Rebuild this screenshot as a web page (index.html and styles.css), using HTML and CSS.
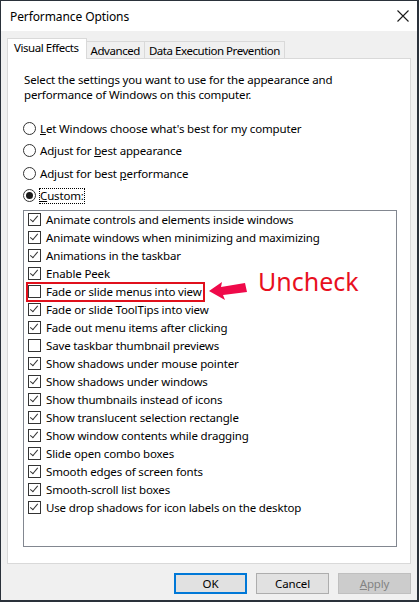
FILE: index.html
```html
<!DOCTYPE html>
<html>
<head>
<meta charset="utf-8">
<link rel="stylesheet" href="styles.css">
</head>
<body>
<div class="window">
  <div class="titlebar">
    <span class="title">Performance Options</span>
    <svg class="close" width="12" height="12" viewBox="0 0 12 12"><path d="M0.5 0.5 L11.5 11.5 M11.5 0.5 L0.5 11.5" stroke="#1a1a1a" stroke-width="1.1" fill="none"/></svg>
  </div>
  <div class="client">
    <div class="tabs">
      <div class="tab active">Visual Effects</div>
      <div class="tab">Advanced</div>
      <div class="tab">Data Execution Prevention</div>
    </div>
    <div class="panel">
      <p class="intro">Select the settings you want to use for the appearance and performance of Windows on this computer.</p>
      <div class="radios">
        <div class="radio"><span class="circle"></span><span><u>L</u>et Windows choose what's best for my computer</span></div>
        <div class="radio"><span class="circle"></span><span>Adjust for <u>b</u>est appearance</span></div>
        <div class="radio"><span class="circle"></span><span>Adjust for best <u>p</u>erformance</span></div>
        <div class="radio"><span class="circle on"></span><span class="focus"><u>C</u>ustom:</span></div>
      </div>
      <div class="listbox">
        <div class="item"><span class="cb on"></span>Animate controls and elements inside windows</div>
        <div class="item"><span class="cb on"></span>Animate windows when minimizing and maximizing</div>
        <div class="item"><span class="cb on"></span>Animations in the taskbar</div>
        <div class="item"><span class="cb on"></span>Enable Peek</div>
        <div class="item"><span class="cb"></span>Fade or slide menus into view</div>
        <div class="item"><span class="cb on"></span>Fade or slide ToolTips into view</div>
        <div class="item"><span class="cb on"></span>Fade out menu items after clicking</div>
        <div class="item"><span class="cb"></span>Save taskbar thumbnail previews</div>
        <div class="item"><span class="cb on"></span>Show shadows under mouse pointer</div>
        <div class="item"><span class="cb on"></span>Show shadows under windows</div>
        <div class="item"><span class="cb on"></span>Show thumbnails instead of icons</div>
        <div class="item"><span class="cb on"></span>Show translucent selection rectangle</div>
        <div class="item"><span class="cb on"></span>Show window contents while dragging</div>
        <div class="item"><span class="cb on"></span>Slide open combo boxes</div>
        <div class="item"><span class="cb on"></span>Smooth edges of screen fonts</div>
        <div class="item"><span class="cb on"></span>Smooth-scroll list boxes</div>
        <div class="item"><span class="cb on"></span>Use drop shadows for icon labels on the desktop</div>
      </div>
    </div>
    <div class="buttons">
      <div class="btn default">OK</div>
      <div class="btn">Cancel</div>
      <div class="btn disabled"><u>A</u>pply</div>
    </div>
  </div>
  <div class="annot-box"></div>
  <svg class="annot-arrow" width="40" height="20" viewBox="0 0 40 20"><path d="M1 11 L14 2 L13 7 L37 3 L39 12 L15 15 L17 20 Z" fill="#ef0a4a"/></svg>
  <div class="annot-text">Uncheck</div>
</div>
</body>
</html>
```

FILE: styles.css
```css
html, body { margin: 0; padding: 0; }
body { background: #1e2630; font-family: "Noto Sans", "Open Sans", sans-serif; font-size: 11.5px; letter-spacing: -0.15px; color: #000; }
.window {
  position: relative;
  width: 419px; height: 602px; box-sizing: border-box;
  border-top: 1px solid #2a313a; border-left: 1px solid #2a313a;
  border-right: 2px solid #2a313a; border-bottom: 2px solid #2a313a;
  background: #f0f0f0;
  display: flex; flex-direction: column;
}
.titlebar {
  height: 30px; background: #fff;
  display: flex; align-items: center; justify-content: space-between;
  padding: 0 6px 0 9px;
}
.title { font-size: 12px; letter-spacing: -0.1px; color: #000; }
.close { margin-right: 2px; }
.client { flex: 1; display: flex; flex-direction: column; padding: 7px 6px 0 6px; }
.tabs { display: flex; align-items: flex-end; height: 20px; position: relative; z-index: 1; }
.tab {
  height: 17px; box-sizing: border-box;
  border: 1px solid #d9d9d9; border-bottom: none;
  background: #f0f0f0; padding: 0 4px; line-height: 17px; margin-left: -1px;
  letter-spacing: -0.45px;
}
.tab:first-child { margin-left: 0; }
.tab.active { height: 21px; background: #fff; margin-bottom: -1px; padding: 0 7px 0 6px; line-height: 17px; }
.panel {
  width: 404px; height: 506px; box-sizing: border-box;
  background: #fff; border: 1px solid #d9d9d9;
  padding: 13px 0 0 15px;
}
.intro { margin: 0 0 0 1px; width: 360px; line-height: 15px; }
.radios { margin-top: 18px; display: flex; flex-direction: column; gap: 6.5px; }
.radio { display: flex; align-items: center; height: 16px; gap: 4px; }
.circle {
  width: 13px; height: 13px; box-sizing: border-box; border-radius: 50%;
  border: 1px solid #333; background: #fff; position: relative; flex: none;
}
.circle.on::after {
  content: ""; position: absolute; left: 2px; top: 2px; width: 7px; height: 7px;
  border-radius: 50%; background: #1a1a1a;
}
.focus { outline: 1px dotted #000; outline-offset: 0; line-height: 14px; }
.listbox {
  margin-top: 6px; width: 374px; height: 337px; box-sizing: border-box;
  border: 1px solid #828790; background: #fff; padding: 0 0 0 4px;
}
.item { display: flex; align-items: center; height: 18px; gap: 5px; white-space: nowrap; }
.cb {
  width: 13px; height: 13px; box-sizing: border-box; border: 1px solid #333;
  background: #fff; flex: none; position: relative;
}
.cb.on::after {
  content: ""; position: absolute; left: 3px; top: 0px; width: 3px; height: 7px;
  border-right: 1px solid #333; border-bottom: 1px solid #333;
  transform: rotate(40deg);
}
.buttons { display: flex; justify-content: flex-end; gap: 9px; margin-top: 9px; padding-right: 0; }
.btn {
  width: 73px; height: 21px; box-sizing: border-box; border: 1px solid #adadad;
  background: #e1e1e1; text-align: center; line-height: 19px;
}
.btn.default { border: 2px solid #0078d7; line-height: 17px; }
.btn.disabled { background: #cccccc; border-color: #bfbfbf; color: #838383; }
.annot-box {
  position: absolute; left: 25px; top: 281px; width: 179px; height: 20px; box-sizing: border-box;
  border: 2px solid #e0101c;
}
.annot-arrow { position: absolute; left: 207px; top: 279px; }
.annot-text {
  position: absolute; left: 257px; top: 263px; font-family: "Noto Sans", sans-serif;
  font-size: 25px; letter-spacing: 0; color: #e8101e; line-height: 34px;
}
```
